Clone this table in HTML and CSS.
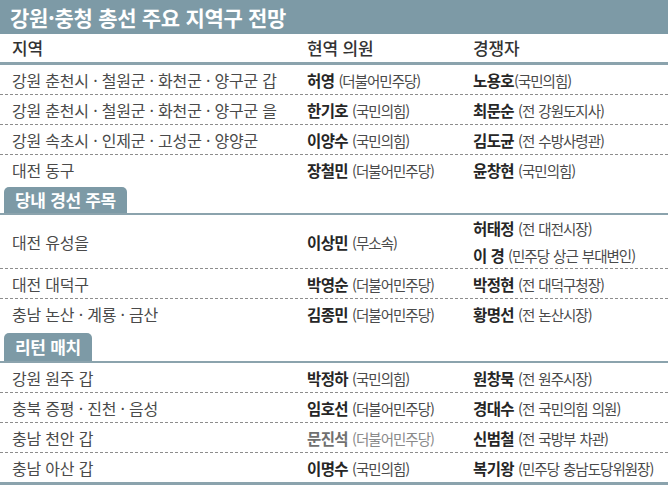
FILE: index.html
```html
<!DOCTYPE html>
<html lang="ko">
<head>
<meta charset="utf-8">
<link rel="stylesheet" href="styles.css">
</head>
<body>
<div class="board">
  <div class="title">강원·충청 총선 주요 지역구 전망</div>
  <div class="row head">
    <div>지역</div><div>현역 의원</div><div>경쟁자</div>
  </div>
  <div class="section">
    <div class="row"><div>강원 춘천시 · 철원군 · 화천군 · 양구군 갑</div><div><b>허영</b> (더불어민주당)</div><div><b>노용호</b>(국민의힘)</div></div>
    <div class="row"><div>강원 춘천시 · 철원군 · 화천군 · 양구군 을</div><div><b>한기호</b> (국민의힘)</div><div><b>최문순</b> (전 강원도지사)</div></div>
    <div class="row"><div>강원 속초시 · 인제군 · 고성군 · 양양군</div><div><b>이양수</b> (국민의힘)</div><div><b>김도균</b> (전 수방사령관)</div></div>
    <div class="row last"><div>대전 동구</div><div><b>장철민</b> (더불어민주당)</div><div><b>윤창현</b> (국민의힘)</div></div>
  </div>
  <div class="tabbar t1"><span class="tab">당내 경선 주목</span></div>
  <div class="section">
    <div class="row tall"><div>대전 유성을</div><div><b>이상민</b> (무소속)</div><div class="multi"><span><b>허태정</b> (전 대전시장)</span><span><b>이 경</b> (민주당 상근 부대변인)</span></div></div>
    <div class="row"><div>대전 대덕구</div><div><b>박영순</b> (더불어민주당)</div><div><b>박정현</b> (전 대덕구청장)</div></div>
    <div class="row last"><div>충남 논산 · 계룡 · 금산</div><div><b>김종민</b> (더불어민주당)</div><div><b>황명선</b> (전 논산시장)</div></div>
  </div>
  <div class="tabbar t2"><span class="tab">리턴 매치</span></div>
  <div class="section">
    <div class="row"><div>강원 원주 갑</div><div><b>박정하</b> (국민의힘)</div><div><b>원창묵</b> (전 원주시장)</div></div>
    <div class="row"><div>충북 증평 · 진천 · 음성</div><div><b>임호선</b> (더불어민주당)</div><div><b>경대수</b> (전 국민의힘 의원)</div></div>
    <div class="row"><div>충남 천안 갑</div><div class="faded"><b>문진석</b> (더불어민주당)</div><div><b>신범철</b> (전 국방부 차관)</div></div>
    <div class="row last"><div>충남 아산 갑</div><div><b>이명수</b> (국민의힘)</div><div><b>복기왕</b> (민주당 충남도당위원장)</div></div>
  </div>
  <div class="endline"></div>
</div>
</body>
</html>
```

FILE: styles.css
```css
html, body {
  margin: 0;
  padding: 0;
  background: #ffffff;
}
body {
  font-family: "Noto Sans CJK KR", "Noto Sans", sans-serif;
  color: #4a4a4a;
}
.board {
  width: 668px;
}
.title {
  height: 34px;
  background: #7d9aa6;
  color: #ffffff;
  font-size: 21px;
  font-weight: 700;
  letter-spacing: -0.3px;
  line-height: 34px;
  padding-left: 10px;
}
.row {
  display: grid;
  grid-template-columns: 295px 166px 1fr;
  padding-left: 12px;
  height: 30px;
  align-items: center;
  font-size: 16px;
  letter-spacing: -0.2px;
  border-bottom: 1px dashed #8d8d8d;
  box-sizing: border-box;
  white-space: nowrap;
}
.row > div + div {
  font-size: 14.5px;
  letter-spacing: -1px;
  word-spacing: 1px;
  color: #4a4a4a;
}
.row.last {
  border-bottom: none;
  height: 29px;
}
.row.head {
  height: 31px;
  font-size: 17px;
  font-weight: 500;
  color: #333333;
  border-bottom: 3px solid #8ba3ad;
  padding-bottom: 2px;
}
.row.head > div + div {
  font-size: 17px;
  letter-spacing: -0.2px;
  word-spacing: 0;
  color: #333333;
}
.row b {
  font-size: 15.5px;
  letter-spacing: -0.6px;
  word-spacing: 0;
  font-weight: 700;
  color: #262626;
}
.row.tall {
  height: 54px;
}
.multi {
  display: flex;
  flex-direction: column;
  line-height: 26px;
}
.row > .faded {
  color: #8a8a8a;
}
.faded b {
  color: #707070;
}
.tabbar {
  display: flex;
  padding-left: 4px;
  border-bottom: 2px solid #8ba3ad;
}
.t1 {
  margin-top: 3px;
}
.t2 {
  margin-top: 5px;
}
.tab {
  background: #7d9aa6;
  color: #ffffff;
  font-size: 17px;
  font-weight: 700;
  letter-spacing: -0.3px;
  height: 26px;
  line-height: 26px;
  padding: 0 11px;
  border-radius: 5px 5px 0 0;
}
.t2 .tab {
  height: 28px;
  line-height: 28px;
}
.endline {
  height: 3px;
  background: #8ba3ad;
}
```
